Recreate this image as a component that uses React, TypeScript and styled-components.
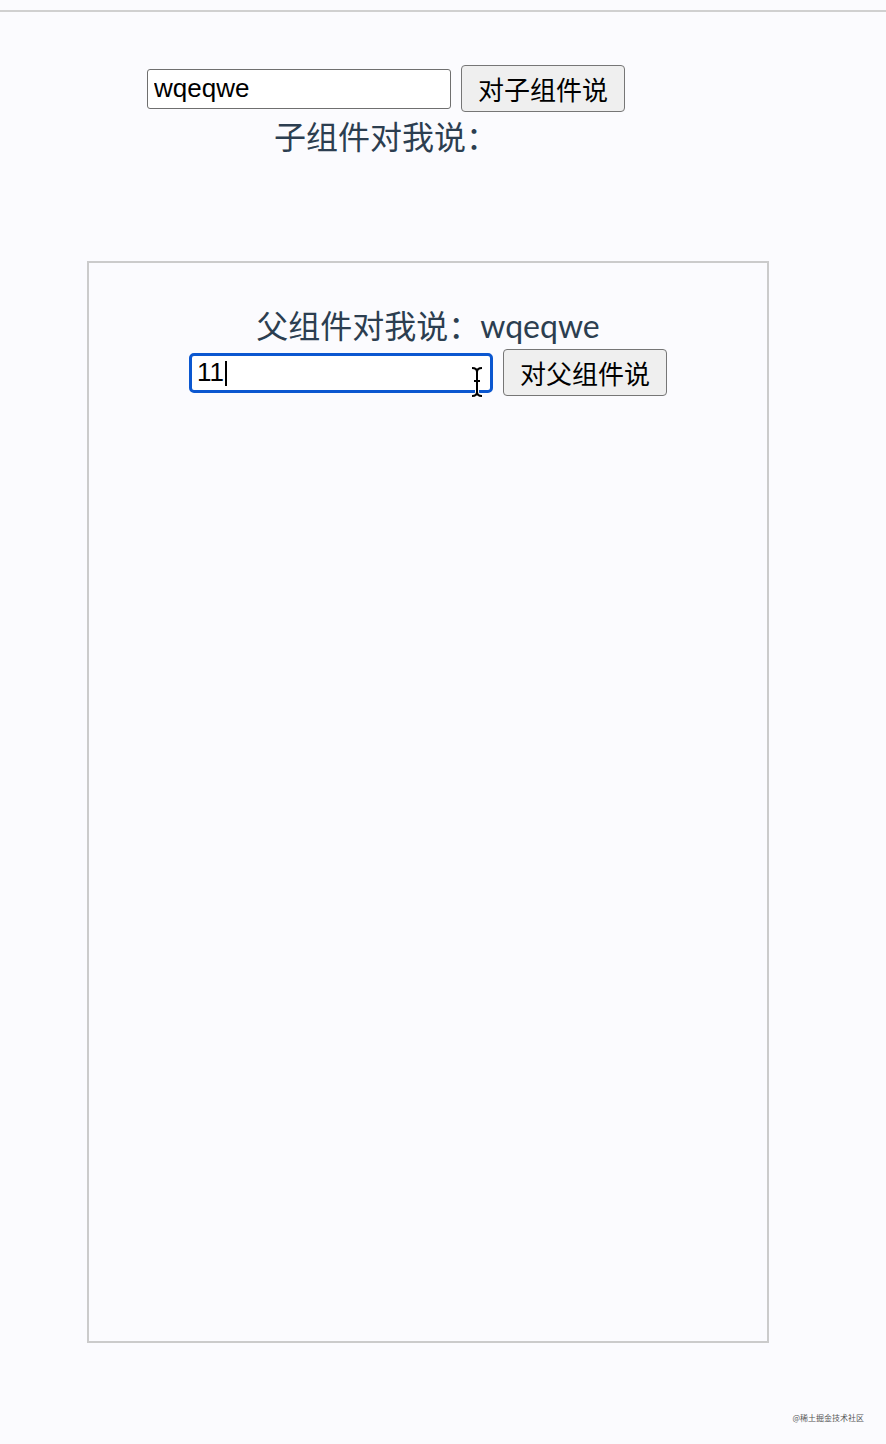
import styled, { createGlobalStyle } from 'styled-components'

const GlobalStyle = createGlobalStyle`
  html, body {
    margin: 0;
    padding: 0;
    background: #fbfbfe;
  }
  body {
    font-family: Lato, "Noto Sans CJK SC", sans-serif;
    color: #2c3e50;
  }
`

const Page = styled.div`
  position: relative;
  width: 886px;
  height: 1444px;
  overflow: hidden;
`

const TopRule = styled.div`
  height: 10px;
  border-bottom: 2px solid #d0d0d0;
`

const Parent = styled.div`
  width: 772px;
  text-align: center;
`

const Row = styled.div<{ $top: number }>`
  display: flex;
  justify-content: center;
  align-items: center;
  gap: 10px;
  margin-top: ${(p) => p.$top}px;
`

const InputWrap = styled.div`
  position: relative;
  display: flex;
`

const TextInput = styled.input<{ $focused?: boolean }>`
  box-sizing: border-box;
  width: 304px;
  height: 40px;
  padding: 0 6px;
  font-family: "Liberation Sans", Arial, sans-serif;
  font-size: 26px;
  color: #000;
  background: #fff;
  border: ${(p) => (p.$focused ? '3px solid #0b57d0' : '1.5px solid #6f6f6f')};
  border-radius: ${(p) => (p.$focused ? '5px' : '3px')};
  outline: none;
  padding-left: ${(p) => (p.$focused ? '5px' : '6px')};
`

const Caret = styled.span`
  position: absolute;
  left: 36px;
  top: 8px;
  width: 2px;
  height: 25px;
  background: #000;
`

const Cursor = styled.svg`
  position: absolute;
  left: 281px;
  top: 13px;
`

const Button = styled.button`
  box-sizing: border-box;
  width: 164px;
  height: 47px;
  padding: 0;
  font-family: "Noto Sans CJK SC", sans-serif;
  font-size: 26px;
  color: #000;
  background: #efefef;
  border: 1.5px solid #767676;
  border-radius: 4px;
`

const Message = styled.div<{ $top: number }>`
  margin-top: ${(p) => p.$top}px;
  font-size: 32px;
  line-height: 40px;
  white-space: nowrap;
`

const ChildBox = styled.div`
  box-sizing: border-box;
  margin: 104px 0 0 87px;
  width: 682px;
  height: 1082px;
  border: 2px solid #cbcbcb;
  padding-top: 43px;
  text-align: center;
`

const Watermark = styled.div`
  position: absolute;
  right: 22px;
  bottom: 21px;
  font-family: "Noto Sans CJK SC", sans-serif;
  font-size: 8px;
  color: #555;
`

export default function App() {
  return (
    <Page>
      <GlobalStyle />
      <TopRule />
      <Parent>
        <Row $top={53}>
          <TextInput value="wqeqwe" readOnly />
          <Button>对子组件说</Button>
        </Row>
        <Message $top={5}>子组件对我说：</Message>
      </Parent>
      <ChildBox>
        <Message $top={0}>父组件对我说：wqeqwe</Message>
        <Row $top={3}>
          <InputWrap>
            <TextInput $focused value="11" readOnly />
            <Caret />
            <Cursor width="14" height="32" viewBox="0 0 14 32">
              <path
                d="M2 2 Q7 2 7 6 L7 26 Q7 30 2 30 M12 2 Q7 2 7 6 M7 26 Q7 30 12 30 M4 15 L10 15"
                fill="none"
                stroke="#fff"
                strokeWidth="4"
              />
              <path
                d="M2 2 Q7 2 7 6 L7 26 Q7 30 2 30 M12 2 Q7 2 7 6 M7 26 Q7 30 12 30 M4 15 L10 15"
                fill="none"
                stroke="#000"
                strokeWidth="2"
              />
            </Cursor>
          </InputWrap>
          <Button>对父组件说</Button>
        </Row>
      </ChildBox>
      <Watermark>@稀土掘金技术社区</Watermark>
    </Page>
  )
}
